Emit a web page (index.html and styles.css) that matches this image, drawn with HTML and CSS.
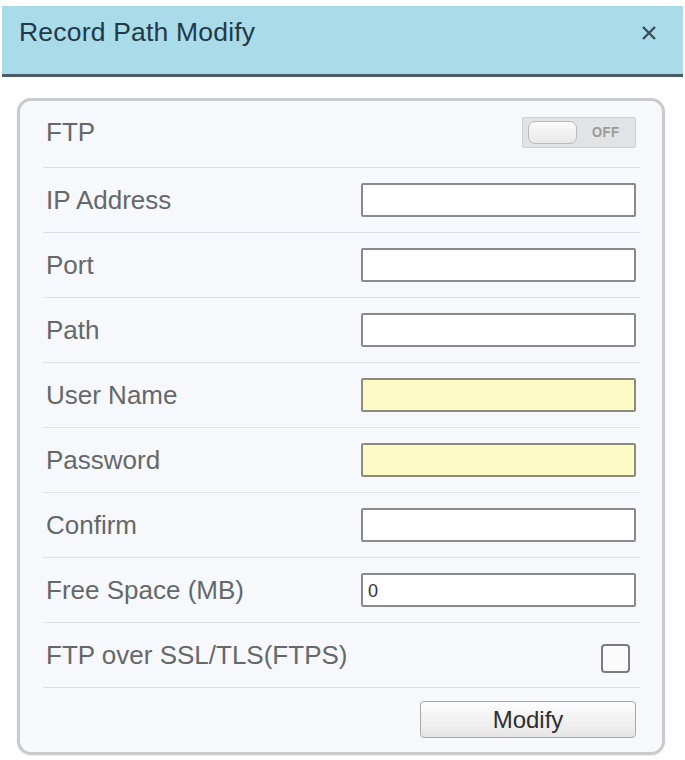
FILE: index.html
```html
<!DOCTYPE html>
<html>
<head>
<meta charset="utf-8">
<link rel="stylesheet" href="styles.css">
</head>
<body>
<div class="dialog">
  <div class="titlebar">
    <span class="title">Record Path Modify</span>
    <svg class="close" width="16" height="14" viewBox="0 0 16 14"><path d="M2 1 L14 13 M14 1 L2 13" stroke="#3d4d59" stroke-width="2.4" fill="none"/></svg>
  </div>
  <div class="card">
    <div class="row first">
      <span class="label">FTP</span>
      <div class="toggle"><span class="knob"></span><span class="off">OFF</span></div>
    </div>
    <div class="row"><span class="label">IP Address</span><div class="input"></div></div>
    <div class="row"><span class="label">Port</span><div class="input"></div></div>
    <div class="row"><span class="label">Path</span><div class="input"></div></div>
    <div class="row"><span class="label">User Name</span><div class="input yellow"></div></div>
    <div class="row"><span class="label">Password</span><div class="input yellow"></div></div>
    <div class="row"><span class="label">Confirm</span><div class="input"></div></div>
    <div class="row"><span class="label">Free Space (MB)</span><div class="input"><span class="val">0</span></div></div>
    <div class="row"><span class="label">FTP over SSL/TLS(FTPS)</span><span class="checkbox"></span></div>
    <div class="row last"><span class="label"></span><div class="button">Modify</div></div>
  </div>
</div>
</body>
</html>
```
FILE: styles.css
```css
html, body {
  margin: 0;
  padding: 0;
  background: #ffffff;
  font-family: "Liberation Sans", Arial, sans-serif;
}
.dialog {
  width: 685px;
  height: 760px;
  padding-top: 6px;
  box-sizing: border-box;
}
.titlebar {
  margin: 0 2px;
  height: 71px;
  box-sizing: border-box;
  background: #a9dbe8;
  border-bottom: 3px solid #4b5b66;
  display: flex;
  justify-content: space-between;
  align-items: flex-start;
  padding: 11px 26px 0 17px;
}
.title {
  font-size: 26.5px;
  line-height: 31px;
  color: #22394a;
  letter-spacing: 0.2px;
}
.close {
  margin-top: 9px;
}
.card {
  margin: 21px 20px 0 17px;
  height: 657px;
  box-sizing: border-box;
  border: 3px solid #c9cacc;
  border-radius: 14px;
  background: #f6f8fb;
  padding: 0 22px 0 23px;
  box-shadow: 0 1px 2px rgba(0,0,0,0.08);
}
.row {
  height: 65px;
  box-sizing: border-box;
  border-bottom: 1px solid #dde0e4;
  display: flex;
  align-items: center;
  justify-content: space-between;
  padding-right: 4px;
}
.row.first {
  height: 67px;
  padding-bottom: 3px;
}
.row.last {
  border-bottom: none;
  height: 64px;
  padding-bottom: 2px;
}
.label {
  font-size: 26px;
  color: #65686b;
  padding-left: 3px;
}
.input {
  width: 275px;
  height: 34px;
  box-sizing: border-box;
  border: 2px solid #8a8a8a;
  border-radius: 2px;
  background: #ffffff;
  display: flex;
  align-items: center;
}
.input.yellow {
  background: #fefac6;
  border-color: #8d8c7c;
}
.val {
  font-size: 18px;
  color: #333;
  padding-left: 5px;
  padding-top: 2px;
}
.toggle {
  width: 114px;
  height: 31px;
  box-sizing: border-box;
  border: 1px solid #cfcfcf;
  background: #e2e3e4;
  border-radius: 2px;
  display: flex;
  align-items: center;
  padding-left: 5px;
}
.knob {
  width: 49px;
  height: 23px;
  box-sizing: border-box;
  border: 1px solid #b9b9b9;
  border-radius: 7px;
  background: linear-gradient(#fbfbfb, #e8e8e8);
}
.off {
  font-size: 13px;
  color: #9a9a9a;
  font-weight: bold;
  margin-left: 15px;
  letter-spacing: 0.5px;
  transform: scaleY(1.1);
}
.checkbox {
  width: 29px;
  height: 29px;
  box-sizing: border-box;
  border: 2px solid #7c7c7c;
  border-radius: 4px;
  background: #fbfbfb;
  margin-right: 6px;
  margin-top: 6px;
}
.button {
  width: 216px;
  height: 37px;
  box-sizing: border-box;
  border: 1px solid #a9a9a9;
  border-radius: 4px;
  background: linear-gradient(#fdfdfd, #e6e6e6);
  font-size: 24px;
  color: #2f2f2f;
  display: flex;
  align-items: center;
  justify-content: center;
  padding-top: 1px;
  margin-top: 1px;
}
```
